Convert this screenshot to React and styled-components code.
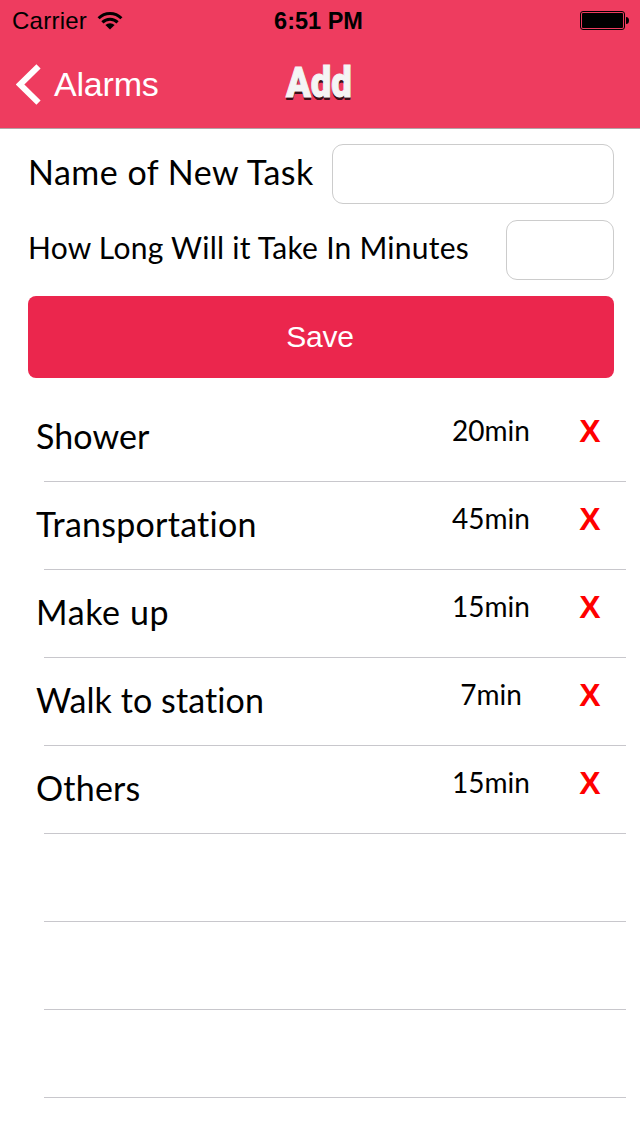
import styled, { createGlobalStyle } from "styled-components";

const GlobalStyle = createGlobalStyle`
  * {
    box-sizing: border-box;
  }
  body {
    margin: 0;
    background-color: white;
    color: black;
    font-family: Lato, "Open Sans", sans-serif;
  }
`;

const Screen = styled.div`
  width: 640px;
  height: 1136px;
  overflow: hidden;
  background-color: white;
`;

const Header = styled.header`
  height: 129px;
  background-color: #ee3c5f;
  border-bottom: 1px solid #b2a3a6;
  font-family: "Liberation Sans", Arial, sans-serif;
`;

const StatusBar = styled.div`
  display: grid;
  grid-template-columns: 1fr auto 1fr;
  align-items: center;
  height: 40px;
  padding: 1px 11px 0 12px;
  font-size: 24px;
`;

const Carrier = styled.div`
  display: flex;
  align-items: center;
  gap: 10px;
  letter-spacing: 0.25px;
`;

const Clock = styled.span`
  margin: 2px 4px 0 0;
  font-size: 23.5px;
  font-weight: bold;
`;

const BatteryIcon = styled.svg`
  justify-self: end;
`;

const NavBar = styled.nav`
  display: grid;
  grid-template-columns: 1fr auto 1fr;
  align-items: center;
  height: 88px;
  padding: 0 16px;
`;

const BackButton = styled.a`
  display: flex;
  align-items: center;
  gap: 13px;
  color: white;
  font-size: 34px;
  letter-spacing: -0.2px;
`;

const Title = styled.h1`
  margin: 0 2px 3px 0;
  color: #f5f5f5;
  font-family: Roboto, sans-serif;
  font-size: 42px;
  font-weight: 900;
  line-height: 84px;
  text-shadow: 0 2px 0 #3a0f18, 0 3px 0 #3a0f18;
  transform: scaleX(0.87);
  -webkit-text-stroke: 1px #f5f5f5;
`;

const Form = styled.form`
  display: flex;
  flex-direction: column;
  gap: 16px;
  padding: 15px 26px 16px 28px;
`;

const Field = styled.label`
  display: flex;
  align-items: center;
  justify-content: space-between;
  height: 60px;
  white-space: nowrap;
`;

const Label = styled.span`
  padding-bottom: 6px;
  font-size: ${(props) => props.$size}px;
  letter-spacing: ${(props) => props.$spacing}px;
`;

const Input = styled.input`
  width: ${(props) => props.$width}px;
  height: 60px;
  border: 1px solid #cccccc;
  border-radius: 11px;
  background-color: white;
`;

const SaveButton = styled.button`
  height: 82px;
  padding: 0 2px 0 0;
  border: none;
  border-radius: 8px;
  background-color: #eb264d;
  color: white;
  font-family: "Liberation Sans", Arial, sans-serif;
  font-size: 30px;
  letter-spacing: -0.2px;
`;

const TaskList = styled.ul`
  margin: 0;
  padding: 0 14px 0 44px;
  list-style: none;
`;

const TaskRow = styled.li`
  display: flex;
  height: 88px;
  border-bottom: 1px solid #c8c7cc;
`;

const TaskName = styled.span`
  flex: 1;
  margin-left: -8px;
  font-size: 34px;
  line-height: 84px;
  letter-spacing: ${(props) => props.$spacing}px;
`;

const Duration = styled.span`
  width: 100px;
  font-size: 28px;
  line-height: 72px;
  text-align: center;
`;

const RemoveButton = styled.button`
  width: 72px;
  height: 74px;
  margin-left: 13px;
  padding: 0;
  border: none;
  background: none;
  color: red;
  font-family: "Liberation Sans", Arial, sans-serif;
  font-size: 32px;
  font-weight: bold;
`;

const tasks = [
  { name: "Shower", time: "20min", spacing: 0.1 },
  { name: "Transportation", time: "45min", spacing: 0.25 },
  { name: "Make up", time: "15min", spacing: 0.6 },
  { name: "Walk to station", time: "7min", spacing: 0.1 },
  { name: "Others", time: "15min", spacing: 0.2 },
];

const WifiIcon = () => (
  <svg width='26' height='20' viewBox='0 0 26 20'>
    <g fill='none' stroke='black' strokeWidth='3'>
      <path d='M1.6 7.2 A16.2 16.2 0 0 1 24.4 7.2' />
      <path d='M5.4 11.4 A10.6 10.6 0 0 1 20.6 11.4' />
    </g>
    <path d='M13 18.5 L8.4 14 A6.6 6.6 0 0 1 17.6 14 Z' fill='black' />
  </svg>
);

const App = () => {
  return (
    <Screen>
      <GlobalStyle />
      <Header>
        <StatusBar>
          <Carrier>
            Carrier
            <WifiIcon />
          </Carrier>
          <Clock>6:51 PM</Clock>
          <BatteryIcon width='49' height='19' viewBox='0 0 49 19'>
            <rect x='0.5' y='0.5' width='44' height='18' rx='2.5' fill='none' stroke='black' />
            <rect x='2' y='2' width='41' height='15' rx='1' fill='black' />
            <path d='M46 6 Q49 6 49 9.5 Q49 13 46 13 Z' fill='black' />
          </BatteryIcon>
        </StatusBar>
        <NavBar>
          <BackButton>
            <svg width='25' height='41' viewBox='0 0 25 41'>
              <path d='M22.5 2.3 L4 20.5 L22.5 38.7' fill='none' stroke='white' strokeWidth='6' />
            </svg>
            Alarms
          </BackButton>
          <Title>Add</Title>
        </NavBar>
      </Header>
      <Form>
        <Field>
          <Label $size={34} $spacing={0.5}>
            Name of New Task
          </Label>
          <Input $width={282} />
        </Field>
        <Field>
          <Label $size={30} $spacing={0.25}>
            How Long Will it Take In Minutes
          </Label>
          <Input $width={108} />
        </Field>
        <SaveButton type='button'>Save</SaveButton>
      </Form>
      <TaskList>
        {tasks.map((task) => (
          <TaskRow key={task.name}>
            <TaskName $spacing={task.spacing}>{task.name}</TaskName>
            <Duration>{task.time}</Duration>
            <RemoveButton>X</RemoveButton>
          </TaskRow>
        ))}
        <TaskRow />
        <TaskRow />
        <TaskRow />
      </TaskList>
    </Screen>
  );
};

export default App;
